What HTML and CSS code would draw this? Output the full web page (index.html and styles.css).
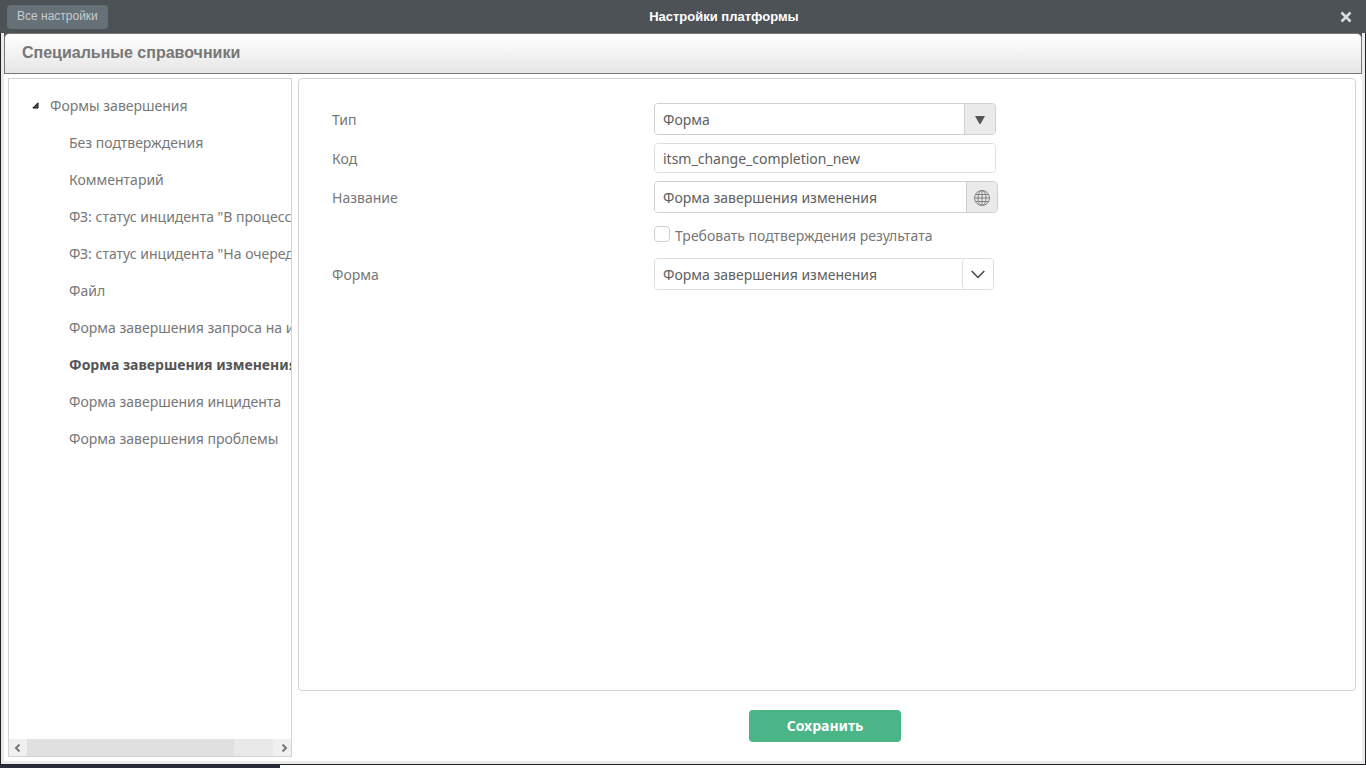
FILE: index.html
```html
<!DOCTYPE html>
<html lang="ru">
<head>
<meta charset="utf-8">
<title>Настройки платформы</title>
<link rel="stylesheet" href="styles.css">
</head>
<body>
<header class="topbar">
  <button class="all-settings" type="button">Все настройки</button>
  <h1 class="topbar-title">Настройки платформы</h1>
  <button class="close" type="button" aria-label="Закрыть">
    <svg width="12" height="12" viewBox="0 0 12 12"><path d="M1.500 1.500L10.500 10.500M10.500 1.500L1.500 10.500" stroke="#d9dbdc" stroke-width="2.600" fill="none"/></svg>
  </button>
</header>
<div class="frame">
  <div class="heading-wrap"><h2 class="heading">Специальные справочники</h2></div>
  <div class="columns">
    <nav class="sidebar">
      <div class="tree">
        <a class="node root" href="#"><svg class="toggle" width="7" height="7" viewBox="0 0 7 7"><path d="M6 .8V6H.8Z" fill="#555" stroke="#111"/></svg>Формы завершения</a>
        <a class="node" href="#">Без подтверждения</a>
        <a class="node" href="#">Комментарий</a>
        <a class="node" href="#">ФЗ: статус инцидента "В процессе"</a>
        <a class="node" href="#">ФЗ: статус инцидента "На очереди"</a>
        <a class="node" href="#">Файл</a>
        <a class="node" href="#">Форма завершения запроса на изменение</a>
        <a class="node current" href="#">Форма завершения изменения</a>
        <a class="node" href="#">Форма завершения инцидента</a>
        <a class="node" href="#">Форма завершения проблемы</a>
      </div>
      <div class="scrollbar">
        <button class="scroll-btn" type="button" aria-label="Влево"><svg width="7" height="8" viewBox="0 0 7 8"><path d="M5.500 .5L2 4L5.500 7.500" fill="none" stroke="#777" stroke-width="2"/></svg></button>
        <div class="scroll-track"><div class="scroll-thumb"></div></div>
        <button class="scroll-btn" type="button" aria-label="Вправо"><svg width="7" height="8" viewBox="0 0 7 8"><path d="M1.500 .5L5 4L1.500 7.500" fill="none" stroke="#777" stroke-width="2"/></svg></button>
      </div>
    </nav>
    <form class="content">
      <div class="panel">
        <div class="row">
          <label class="label" for="type">Тип</label>
          <div class="field">
            <select class="control" id="type"><option>Форма</option></select>
            <span class="addon"><svg width="10" height="8" viewBox="0 0 10 8"><path d="M0 0H10L5.500 8H4.500Z" fill="#555"/></svg></span>
          </div>
        </div>
        <div class="row">
          <label class="label" for="code">Код</label>
          <div class="field light"><input class="control short" id="code" type="text" value="itsm_change_completion_new"></div>
        </div>
        <div class="row">
          <label class="label" for="name">Название</label>
          <div class="field wide">
            <input class="control" id="name" type="text" value="Форма завершения изменения">
            <button class="addon" type="button" aria-label="Перевод"><svg width="16" height="16" viewBox="0 0 16 16" fill="none" stroke="#808080"><circle cx="8" cy="8" r="7.500"/><ellipse cx="8" cy="8" rx="4" ry="7.500"/><path d="M8 .5V15.500M.5 8H15.500M1.800 4.500H14.200M1.800 11.500H14.200"/></svg></button>
          </div>
        </div>
        <div class="row check-row">
          <span></span>
          <div class="check"><input class="checkbox" id="confirm" type="checkbox"><label for="confirm">Требовать подтверждения результата</label></div>
        </div>
        <div class="row">
          <label class="label" for="form">Форма</label>
          <div class="field narrow light">
            <select class="control" id="form"><option>Форма завершения изменения</option></select>
            <span class="addon plain"><svg width="14" height="9" viewBox="0 0 14 9"><path d="M.7 1L7 7.500L13.300 1" fill="none" stroke="#444" stroke-width="1.500"/></svg></span>
          </div>
        </div>
      </div>
      <div class="actions"><button class="save" type="button">Сохранить</button></div>
    </form>
  </div>
</div>
<div class="bottom"><div class="bottom-dark"></div></div>
</body>
</html>
```
FILE: styles.css
```css
* { box-sizing: border-box; }
body {
  margin: 0;
  height: 100vh;
  display: flex;
  flex-direction: column;
  background: #fff;
  color: #777;
  font: 14px/20px "Noto Sans", sans-serif;
  overflow: hidden;
}
button, input, select { font: inherit; color: inherit; margin: 0; }
button { border: 0; padding: 0; cursor: pointer; }
svg { display: block; }

.topbar {
  flex: none;
  height: 33px;
  padding: 0 14px 0 7px;
  display: flex;
  align-items: center;
  background: #4d5256;
  font-family: "Liberation Sans", Arial, sans-serif;
}
.all-settings {
  height: 24px;
  padding: 0 10px 1px;
  border-radius: 4px;
  background: #657077;
  color: #c8cbcd;
  font-size: 12px;
}
.topbar-title { flex: 1; margin: 0; color: #fff; font-size: 13px; line-height: 20px; text-align: center; }
.close { background: none; }

.frame {
  flex: 1;
  min-height: 0;
  display: flex;
  flex-direction: column;
  border: 1px solid #202226;
  border-top: 0;
  box-shadow: inset 3px 0 #ebe9e9, inset -3px 0 #ebebeb, inset 0 -3px #ebebeb;
  padding: 0 3px 3px;
}
.heading-wrap { flex: none; background: #4d5256; }
.heading {
  margin: 0;
  height: 41px;
  padding: 0 17px;
  border: 1px solid #77777a;
  border-radius: 5px 5px 0 0;
  background: linear-gradient(#fff, #e6e6e6);
  font: bold 16px/38px "Liberation Sans", Arial, sans-serif;
}
.columns { flex: 1; min-height: 0; display: flex; gap: 6px; padding: 4px 6px 4px 4px; }

.sidebar {
  flex: none;
  width: 284px;
  display: flex;
  flex-direction: column;
  border: 1px solid #d3d3d3;
}
.tree { flex: 1; overflow: hidden; padding-top: 8px; }
.node {
  display: block;
  padding-left: 60px;
  color: inherit;
  line-height: 37px;
  text-decoration: none;
  white-space: nowrap;
}
.root { display: flex; align-items: center; gap: 11px; padding-left: 23px; }
.current { color: #555; font-weight: bold; }
.scrollbar { flex: none; height: 17px; display: flex; background: #f0f0f0; }
.scroll-btn { width: 18px; padding-right: 2px; display: grid; place-items: center; background: #f0f0f0; }
.scroll-btn:last-child { padding: 0 0 0 4px; }
.scroll-track { flex: 1; background: #e9e9e9; }
.scroll-thumb { width: 84%; height: 100%; background: #e0e0e0; }

.content { flex: 1; min-width: 0; display: flex; flex-direction: column; }
.panel {
  flex: 1;
  display: flex;
  flex-direction: column;
  gap: 8px;
  padding: 24px 33px;
  border: 1px solid #d3d3d3;
  border-radius: 4px;
}
.row { display: grid; grid-template-columns: 322px 1fr; align-items: center; }
.label { padding-top: 2px; }
.field {
  width: 342px;
  display: flex;
  border: 1px solid #d0d0d0;
  border-radius: 4px;
  overflow: hidden;
}
.wide { width: 344px; }
.narrow { width: 340px; }
.light { border-color: #dedede; }
.control {
  flex: 1;
  min-width: 0;
  height: 30px;
  padding: 1px 8px 0;
  border: 0;
  outline: 0;
  appearance: none;
  background: #fff;
  color: #606060;
}
.short { height: 28px; }
.addon {
  width: 31px;
  padding-top: 1px;
  display: grid;
  place-items: center;
  border-left: 1px solid #d0d0d0;
  background: #eaeaea;
  pointer-events: none;
}
button.addon { pointer-events: auto; }
.plain { background: #fff; border-color: #dedede; border-radius: 4px 0 0 4px; }
.check-row { height: 29px; }
.check { display: flex; gap: 5px; align-items: center; }
.checkbox {
  width: 16px;
  height: 16px;
  margin-bottom: 3px;
  appearance: none;
  border: 1px solid #d0d0d0;
  border-radius: 4px;
  background: #fff;
}
.checkbox:checked { background: #4ab587; }
.actions { flex: none; display: flex; justify-content: center; padding: 19px 4px 15px 0; }
.save {
  width: 152px;
  height: 32px;
  border-radius: 4px;
  background: #4ab587;
  color: #fff;
  font-weight: bold;
}
.bottom { flex: none; height: 3px; }
.bottom-dark { width: 280px; height: 100%; background: #292e3b; }
```
